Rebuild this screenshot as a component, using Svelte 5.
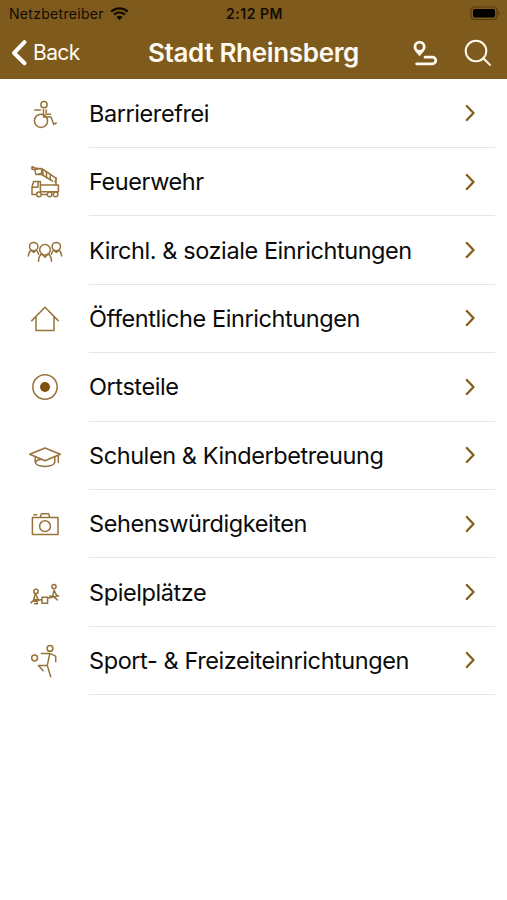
<script lang="ts">
  type Entry = { icon: string; label: string };

  const entries: Entry[] = [
    { icon: "wheelchair", label: "Barrierefrei" },
    { icon: "firetruck", label: "Feuerwehr" },
    { icon: "people", label: "Kirchl. & soziale Einrichtungen" },
    { icon: "house", label: "Öffentliche Einrichtungen" },
    { icon: "district", label: "Ortsteile" },
    { icon: "school", label: "Schulen & Kinderbetreuung" },
    { icon: "camera", label: "Sehenswürdigkeiten" },
    { icon: "seesaw", label: "Spielplätze" },
    { icon: "sport", label: "Sport- & Freizeiteinrichtungen" },
  ];
</script>

<div class="screen">
  <header>
    <div class="status">
      <div class="carrier">
        <span>Netzbetreiber</span>
        <svg width="19" height="14" viewBox="0 0 19 14">
          <path d="M1.2 4.7a11.8 11.8 0 0 1 16.6 0" />
          <path d="M4 7.6a7.8 7.8 0 0 1 11 0" />
          <path class="dot" d="M6.4 10.1a4.4 4.4 0 0 1 6.2 0L9.5 13.2z" />
        </svg>
      </div>
      <span class="time">2:12 PM</span>
      <svg class="battery" width="31" height="16" viewBox="0 0 31 16">
        <rect class="shell" x="2" y="1" width="26" height="12.5" rx="3.5" />
        <rect x="4" y="2.9" width="22" height="8.7" rx="1.8" />
        <path class="tip" d="M29.3 5q2 2.2 0 4.4z" />
      </svg>
    </div>

    <nav>
      <button class="back" aria-label="Back">
        <svg width="17" height="28" viewBox="0 0 17 28"><path d="M13.5 3.2L3 14L13.5 24.3" /></svg>
        <span>Back</span>
      </button>
      <h1>Stadt Rheinsberg</h1>
      <div class="actions">
        <button aria-label="Route">
          <svg width="26" height="28" viewBox="0 0 26 28">
            <path class="pin" fill-rule="evenodd" d="M7.6 1.7a6 6 0 0 1 6 6c0 3.3-3.2 6-6 9.6c-2.8-3.6-6-6.3-6-9.6a6 6 0 0 1 6-6zm0 2.9a3.2 3.2 0 1 0 0 6.4a3.2 3.2 0 0 0 0-6.4z" />
            <path d="M13 18.2h7.5a3.3 3.3 0 0 1 0 6.6H4.6" />
          </svg>
        </button>
        <button aria-label="Search">
          <svg class="search" width="28" height="28" viewBox="0 0 28 28">
            <circle cx="12" cy="12" r="10.3" />
            <path d="M19.3 19.2L26 25.9" />
          </svg>
        </button>
      </div>
    </nav>
  </header>

  <ul>
    {#each entries as entry}
      <li>
        <svg class="icon" width="50" height="50" viewBox="-25 -25 50 50">
          {#if entry.icon === "wheelchair"}
            <circle cx="-1" cy="-9.3" r="3.1" />
            <circle cx="-4" cy="6.8" r="6.6" />
            <path d="M-10.2 -3.9H-4.5M-1.5 -4.5V3H6L8.8 10.4L11.2 9M1.2 -4V.2H5.5" />
          {:else if entry.icon === "firetruck"}
            <path d="M-13 -15.2l3.2 1.2l7 1L11.4 -3.6L10 0M-9 -7.6L-4 -7.8L7.4 -1M-13 -15.2v2.4l3 .6M-10.4 -12.6l6.8 -.8l.6 4.4l-6 1.6z" />
            <path d="M-2.6 -12.6l.8 6M1.4 -10L1.6 -4.4M5.4 -7.2L5 -2.4M11 -3.4V3" />
            <path d="M-4.6 3H13.4V9.8H-4.6zM-4.6 3V-.5H-11.4L-13 5V12.4H-9M-12.4 5.2H-7V0M-3 12.4H2.2M-4.6 9.8V11" />
            <circle cx="-6.1" cy="12.4" r="2.3" />
            <circle cx="4.6" cy="12.4" r="2.3" />
            <circle cx="10.6" cy="12.4" r="2.3" />
          {:else if entry.icon === "people"}
            <circle cx="0" cy="-1.2" r="5.3" />
            <circle cx="-11.3" cy="-4.4" r="4.2" />
            <circle cx="11.3" cy="-4.4" r="4.2" />
            <path d="M-6.5 10.2q.2-5.6 3.4-7.2l3.1 3.1l3.1-3.1q3.2 1.6 3.4 7.2M-13.8 -.8q-2.5 1.6-2.8 5.8M-13.8 -.8l2.5 2.2l2.4-2.2q2 1 2.4 4M13.8 -.8q2.5 1.6 2.8 5.8M13.8 -.8l-2.5 2.2l-2.4-2.2q-2 1-2.4 4" />
          {:else if entry.icon === "house"}
            <path d="M-13.2 1.6L0 -11.7L13.2 1.6M-9 -2.2V11.4H9V-2.2" />
          {:else if entry.icon === "district"}
            <circle cx="0" cy="0" r="12.2" />
            <circle class="fill" cx="0" cy="0" r="5" />
          {:else if entry.icon === "school"}
            <path d="M-15.3 -1.8L0 -8L15.3 -1.8L0 4.8zM-9.8 1V6.2Q-9 10.4 0 10.4T9.8 6.2V1M-9.8 6.4Q-8 3.6 -3.6 3.3M13.3 -1V6.2" />
          {:else if entry.icon === "camera"}
            <path d="M-12.6 -6.4H13V10.4H-12.6zM-4.7 -6.6L-3.6 -10.3H3.6L4.7 -6.6M-11 -9.3H-8.4" />
            <circle cx="0" cy="2.2" r="5.4" />
          {:else if entry.icon === "seesaw"}
            <circle cx="-9" cy="-1.6" r="2.1" />
            <circle cx="9" cy="-6.4" r="2.1" />
            <path d="M-10 1.8L-11.5 7.2L-13.8 10M-9 1.8L-6.7 6.5H-11.4M-13.5 8.8L-3 6.5M-8.2 7.6L-7.6 10.8H-10.5M-3 4.2H2.6V10.3H-3zM2.6 5.2L13.6 2.8M9 -2.8L7.6 3.6L4.6 3M9 -2.8L11.6 2.4M8.6 3.6L12.5 7" />
          {:else}
            <circle cx="5" cy="-12.6" r="2.9" />
            <circle cx="-10.4" cy="-3" r="2.9" />
            <path d="M-3.7 -7.6H4.8L10.7 -4.9V.8M4.8 -7.6L2.3 4.4L5.7 15.8M2.3 4.4H-6.6L-1.8 9.8" />
          {/if}
        </svg>
        <div class="cell">
          <span class="label">{entry.label}</span>
          <svg class="chevron" width="14" height="20" viewBox="0 0 14 20"><path d="M3.8 3L10.5 10L3.8 17" /></svg>
        </div>
      </li>
    {/each}
  </ul>
</div>

<style>
  :global(body) { margin: 0; background: #fff; }
  .screen { width: 507px; height: 900px; background: #fff; overflow: hidden;
    font-family: Inter, "Liberation Sans", sans-serif; }

  header { height: 79px; background: #7f5a1d; }
  svg { display: block; fill: none; stroke-linecap: round; stroke-linejoin: round; }
  button { border: 0; padding: 0; background: none; color: inherit; font: inherit; }

  .status { height: 27px; display: grid; grid-template-columns: 1fr auto 1fr;
    align-items: center; padding: 0 7px 0 9px; box-sizing: border-box;
    font-size: 14px; color: #120c02; }
  .carrier { display: flex; align-items: center; gap: 6px; letter-spacing: 0.3px; }
  .carrier svg { stroke: #120c02; stroke-width: 2.3; stroke-linecap: butt; }
  .carrier .dot { fill: #120c02; stroke: none; }
  .time { font-weight: 600; letter-spacing: 0.5px; }
  .battery { justify-self: end; fill: #000; }
  .battery .shell { fill: none; stroke: #573c10; stroke-width: 1.2; }
  .battery .tip { fill: #573c10; }

  nav { height: 52px; display: grid; grid-template-columns: 1fr auto 1fr;
    align-items: center; padding: 0 15px 1px; box-sizing: border-box; color: #fffaf0; }
  .back { display: flex; align-items: center; gap: 5px; margin-left: -4px;
    font-size: 21px; letter-spacing: -0.6px; }
  .back svg { stroke: #fff; stroke-width: 4; }
  h1 { margin: 0; font-size: 26px; font-weight: 600; letter-spacing: -0.33px; }
  .actions { display: flex; justify-content: flex-end; align-items: center; gap: 26px; }
  .actions svg { stroke: #fffaf0; stroke-width: 2.7; }
  .actions .pin { fill: #fffaf0; stroke: none; }
  .actions .search { stroke-width: 2; }

  ul { list-style: none; margin: 0; padding: 0.6px 0 0; }
  li { height: 68.4px; display: flex; align-items: center; padding: 0 12px 0 20px; }
  .icon { flex: none; stroke: #96733a; stroke-width: 1.5; }
  .icon .fill { fill: #80510e; stroke: none; }
  .cell { flex: 1; height: 100%; margin-left: 19px; display: flex; align-items: center;
    justify-content: space-between; padding-right: 18px; box-sizing: border-box;
    border-bottom: 1.4px solid #e6e6e6; }
  .label { font-size: 23.5px; letter-spacing: -0.42px; color: #0a0a0a; white-space: nowrap; }
  .chevron { stroke: #865d1c; stroke-width: 2.3; }
</style>
